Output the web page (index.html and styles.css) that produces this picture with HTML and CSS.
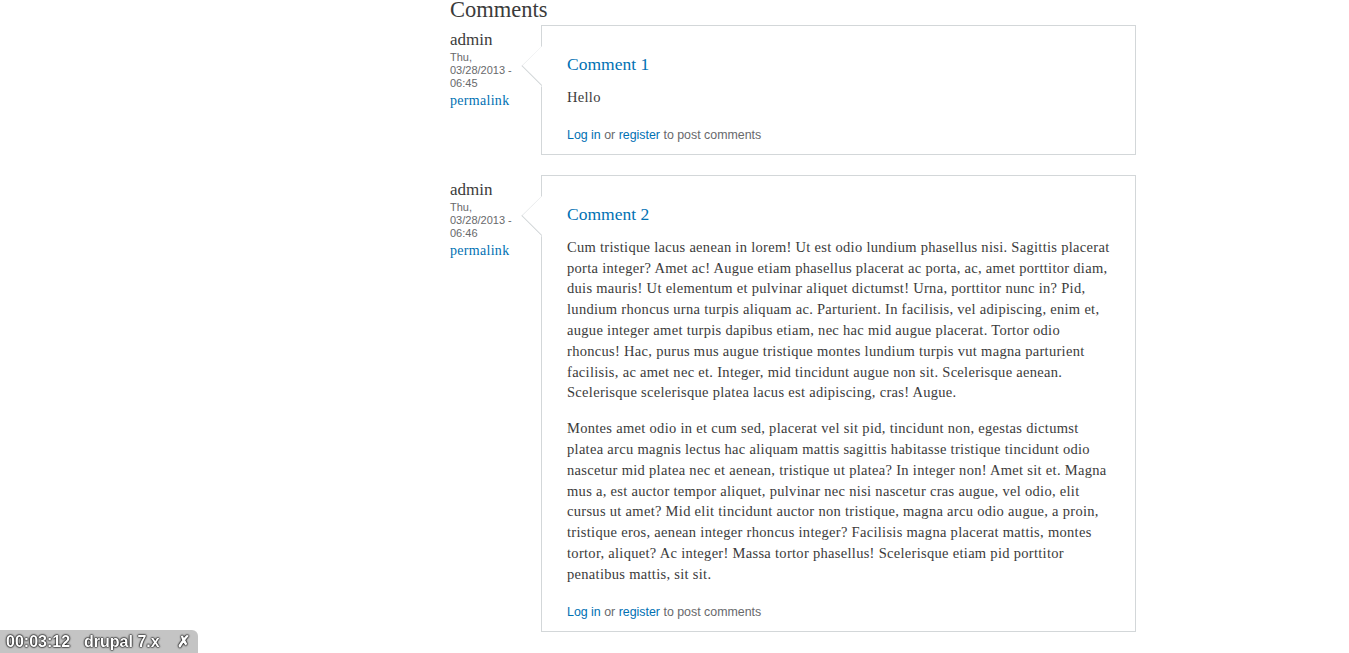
FILE: index.html
```html
<!DOCTYPE html>
<html lang="en">

<head>
  <meta charset="UTF-8" />
  <meta name="viewport" content="width=device-width, initial-scale=1.0" />
  <title>Comments | drupal 7.x</title>
  <link rel="stylesheet" href="styles.css">
</head>

<body>

  <section class="comment-wrapper">
    <h2 class="comments-title">Comments</h2>

    <div class="comment">
      <div class="attribution">
        <p class="author">admin</p>
        <p class="comment-time">Thu, 03/28/2013 - 06:45</p>
        <p><a class="permalink" href="#comment-1">permalink</a></p>
      </div>
      <div class="comment-text">
        <span class="comment-arrow"></span>
        <h3><a href="#comment-1">Comment 1</a></h3>
        <div class="content">
          <p>Hello</p>
        </div>
        <ul class="links">
          <li><a href="#">Log in</a> or <a href="#">register</a> to post comments</li>
        </ul>
      </div>
    </div>

    <div class="comment">
      <div class="attribution">
        <p class="author">admin</p>
        <p class="comment-time">Thu, 03/28/2013 - 06:46</p>
        <p><a class="permalink" href="#comment-2">permalink</a></p>
      </div>
      <div class="comment-text">
        <span class="comment-arrow"></span>
        <h3><a href="#comment-2">Comment 2</a></h3>
        <div class="content">
          <p>Cum tristique lacus aenean in lorem! Ut est odio lundium phasellus nisi. Sagittis placerat porta integer? Amet ac! Augue etiam phasellus placerat ac porta, ac, amet porttitor diam, duis mauris! Ut elementum et pulvinar aliquet dictumst! Urna, porttitor nunc in? Pid, lundium rhoncus urna turpis aliquam ac. Parturient. In facilisis, vel adipiscing, enim et, augue integer amet turpis dapibus etiam, nec hac mid augue placerat. Tortor odio rhoncus! Hac, purus mus augue tristique montes lundium turpis vut magna parturient facilisis, ac amet nec et. Integer, mid tincidunt augue non sit. Scelerisque aenean. Scelerisque scelerisque platea lacus est adipiscing, cras! Augue.</p>
          <p>Montes amet odio in et cum sed, placerat vel sit pid, tincidunt non, egestas dictumst platea arcu magnis lectus hac aliquam mattis sagittis habitasse tristique tincidunt odio nascetur mid platea nec et aenean, tristique ut platea? In integer non! Amet sit et. Magna mus a, est auctor tempor aliquet, pulvinar nec nisi nascetur cras augue, vel odio, elit cursus ut amet? Mid elit tincidunt auctor non tristique, magna arcu odio augue, a proin, tristique eros, aenean integer rhoncus integer? Facilisis magna placerat mattis, montes tortor, aliquet? Ac integer! Massa tortor phasellus! Scelerisque etiam pid porttitor penatibus mattis, sit sit.</p>
        </div>
        <ul class="links">
          <li><a href="#">Log in</a> or <a href="#">register</a> to post comments</li>
        </ul>
      </div>
    </div>
  </section>

  <div class="timer">
    <span>00:03:12</span>
    <span>drupal 7.x</span>
    <span class="timer-close">&#x2717;</span>
  </div>

</body>

</html>
```

FILE: styles.css
```css
body {
  margin: 0;
  font-family: "Liberation Serif", Georgia, serif;
  color: rgb(59, 59, 59);
  background-color: white;
}

a {
  color: rgb(0, 113, 179);
  text-decoration: none;
}

p {
  margin: 0;
}

.comment-wrapper {
  margin-left: 450px;
  width: 686px;
}

.comments-title {
  margin: -1px 0 4px;
  font-size: 22.5px;
  line-height: 22px;
  font-weight: normal;
}

.comment {
  display: flex;
  margin-bottom: 20px;
}

.attribution {
  width: 80px;
  padding: 5px 11px 0 0;
  flex-shrink: 0;
}

.author {
  font-size: 17px;
  line-height: 19px;
}

.comment-time {
  margin-top: 2px;
  font-family: "Liberation Sans", Arial, sans-serif;
  font-size: 11px;
  line-height: 13px;
  color: rgb(104, 105, 107);
}

.permalink {
  display: inline-block;
  margin-top: 3px;
  font-size: 14px;
  line-height: 16px;
  letter-spacing: 0.3px;
}

.comment-text {
  position: relative;
  flex: 1;
  border: 1px solid rgb(211, 215, 217);
  padding: 28px 25px 10px;
}

.comment-arrow {
  position: absolute;
  left: -21px;
  top: 20px;
  width: 21px;
  height: 41px;
  background: white;
  clip-path: polygon(100% 0, 0 50%, 100% 100%);
}

.comment-arrow::before {
  content: "";
  position: absolute;
  left: 6px;
  top: 5px;
  width: 29px;
  height: 29px;
  border-left: 1px solid rgb(211, 215, 217);
  border-bottom: 1px solid rgb(211, 215, 217);
  transform: rotate(45deg);
  box-sizing: border-box;
}

.comment-text h3 {
  margin: 0 0 12px;
  font-size: 17.5px;
  line-height: 21px;
  font-weight: normal;
}

.content {
  font-size: 14.5px;
  line-height: 20.8px;
  letter-spacing: 0.3px;
}

.content p {
  margin-bottom: 15px;
}

.links {
  list-style: none;
  margin: 18px 0 0;
  padding: 0;
  font-family: "Liberation Sans", Arial, sans-serif;
  font-size: 12.4px;
  line-height: 18px;
  color: rgb(104, 105, 107);
}

.timer {
  position: fixed;
  left: 0;
  bottom: 0;
  display: flex;
  gap: 14px;
  padding: 2px 8px 1px 6px;
  background-color: rgb(196, 196, 196);
  border-radius: 0 6px 0 0;
  font-family: "Liberation Sans", Arial, sans-serif;
  font-weight: bold;
  font-size: 16px;
  line-height: 20px;
  color: white;
  text-shadow: 0 0 2px black, 0 0 2px black, 0 0 1px black;
}

.timer-close {
  margin-left: 3px;
}
```
